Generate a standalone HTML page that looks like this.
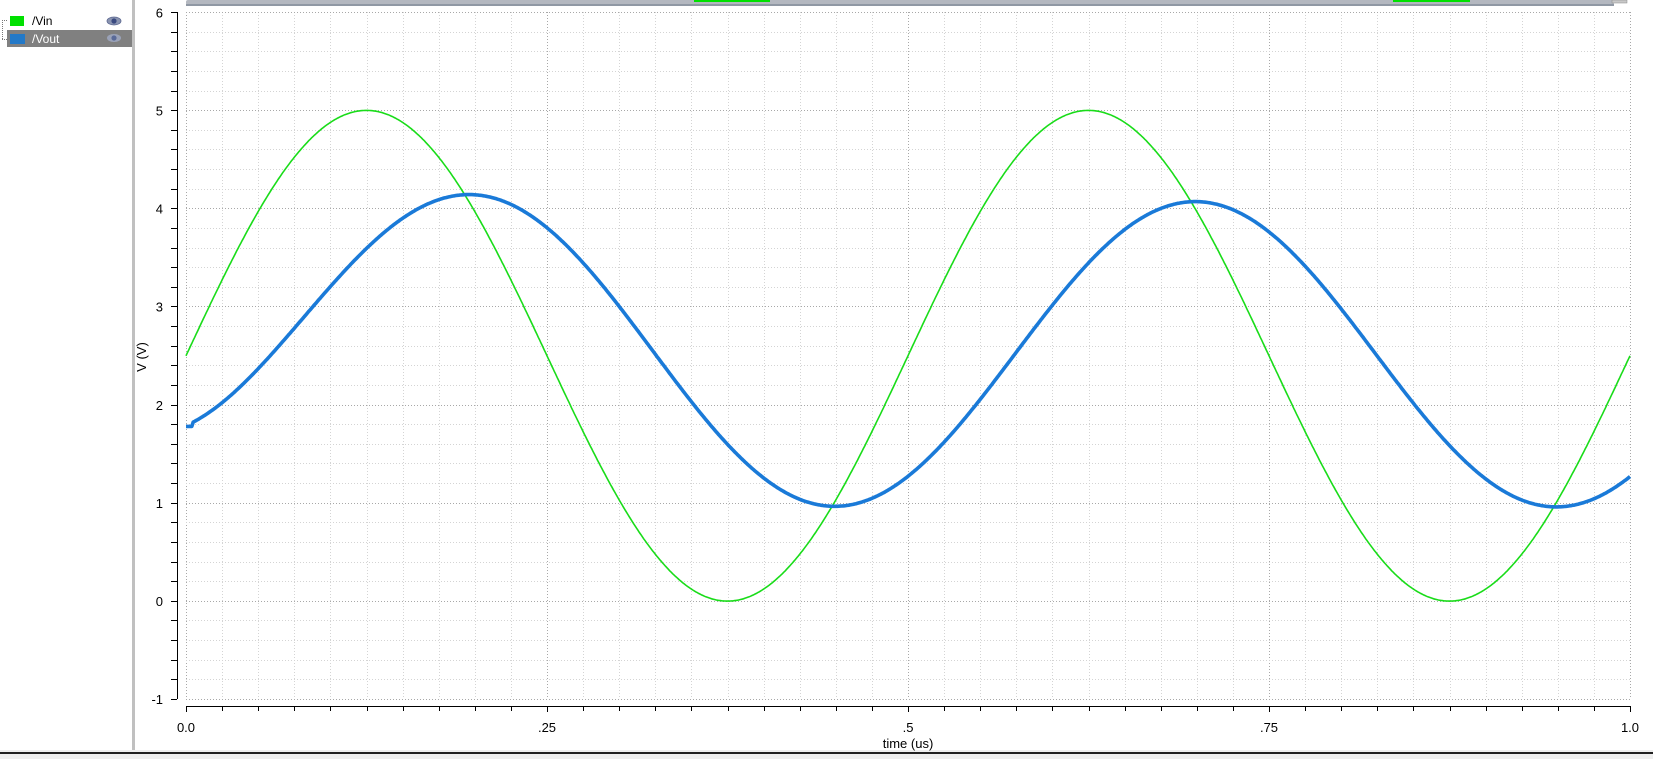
<!DOCTYPE html>
<html><head><meta charset="utf-8">
<style>
html,body{margin:0;padding:0;width:1653px;height:759px;overflow:hidden;background:#fff;font-family:"Liberation Sans",sans-serif;}
svg{position:absolute;left:0;top:0;}
</style></head>
<body>
<svg id="s" width="1653" height="759" xmlns="http://www.w3.org/2000/svg" font-family="Liberation Sans, sans-serif">
<rect x="0" y="0" width="1653" height="759" fill="#fff"/>
<rect x="132" y="0" width="3" height="751" fill="#c0c0c0"/>
<rect x="0" y="750" width="1653" height="9" fill="#eeeeee"/>
<rect x="0" y="752" width="1653" height="2" fill="#202020"/>
<path d="M2 20.5H7 M2.5 20V40 M2 39.5H7" stroke="#777" stroke-dasharray="1,1" fill="none"/>
<rect x="10" y="16" width="14" height="10" fill="#00e000"/>
<text x="32" y="25" font-size="12" fill="#000">/Vin</text>
<g transform="translate(114,21)"><ellipse rx="7" ry="4" fill="#8a94b0"/><circle r="2.6" fill="#3a4a80"/><ellipse rx="7" ry="4" fill="none" stroke="#5a6690" stroke-width="0.8"/></g>
<rect x="7" y="30" width="125" height="17" fill="#808080"/>
<rect x="10" y="34" width="15" height="10" fill="#2379c8"/>
<text x="32" y="43" font-size="12" fill="#fff">/Vout</text>
<g transform="translate(114,38)"><ellipse rx="7" ry="4" fill="#9aa2b8"/><circle r="2.6" fill="#5a6a98"/></g>
<rect x="186" y="0" width="1428" height="5" rx="2" fill="#b4b8c0"/>
<rect x="186" y="4" width="1428" height="2" fill="#9098a4"/>
<rect x="1612" y="0" width="15" height="3" fill="#c8c8c8" stroke="#888" stroke-width="0.5"/>
<rect x="694" y="0" width="76" height="2" fill="#00e000"/>
<rect x="1393" y="0" width="77" height="2" fill="#00e000"/>
<g id="grid"></g>
<g id="axes" stroke="#000" stroke-width="1" fill="none"></g>
<g id="labels" font-size="13" fill="#000"></g>
<text transform="translate(146,357) rotate(-90)" text-anchor="middle" font-size="13" fill="#000">V (V)</text>
<text x="908" y="748" text-anchor="middle" font-size="13" fill="#000">time (us)</text>
<path id="vin" fill="none" stroke="#19dc19" stroke-width="1.6"/>
<path id="vout" fill="none" stroke="#1a7ad8" stroke-width="3.6" stroke-linejoin="round"/>
</svg>
<script>
var NS="http://www.w3.org/2000/svg";
function X(t){return 186+1444*t;}
function Y(v){return 601.1-98.14*v;}
var g=document.getElementById('grid'),a=document.getElementById('axes'),l=document.getElementById('labels');
function ln(p,x1,y1,x2,y2,st,da){var e=document.createElementNS(NS,'line');e.setAttribute('x1',x1);e.setAttribute('y1',y1);e.setAttribute('x2',x2);e.setAttribute('y2',y2);if(st)e.setAttribute('stroke',st);if(da)e.setAttribute('stroke-dasharray',da);p.appendChild(e);}
function tx(x,y,s,anc){var e=document.createElementNS(NS,'text');e.setAttribute('x',x);e.setAttribute('y',y);e.setAttribute('text-anchor',anc);e.textContent=s;l.appendChild(e);}
for(var i=0;i<=40;i++){var x=Math.round(X(i/40))+0.5;var maj=i%10==0;ln(g,x,12,x,699,maj?'#a8a8a8':'#d4d4d4','1,2');ln(a,x,706,x,maj?712:711);}
for(var j=0;j<=35;j++){var y=Math.round(699-j*687/35)+0.5;var maj=j%5==0;ln(g,186,y,1630,y,maj?'#a8a8a8':'#d4d4d4','1,2');ln(a,171,y,177,y);}
ln(a,177.5,12,177.5,699);ln(a,186,706.5,1630,706.5);
for(var v=-1;v<=6;v++){tx(163,Y(v)+5,(v<0?'-1':''+v),'end');}
var xl=['0.0','.25','.5','.75','1.0'];for(var k=0;k<5;k++)tx(X(k/4),732,xl[k],'middle');
var d1='',d2='';
for(var n=0;n<=1000;n++){var t=n/1000;var vi=2.5+2.5*Math.sin(4*Math.PI*t);
var vo=2.515+1.555*Math.sin(4*Math.PI*(t-0.074))+0.52*Math.exp(-t/0.1);
if(t<0.005)vo=1.78;
d1+=(n?'L':'M')+X(t).toFixed(1)+' '+Y(vi).toFixed(1);d2+=(n?'L':'M')+X(t).toFixed(1)+' '+Y(vo).toFixed(1);}
document.getElementById('vin').setAttribute('d',d1);document.getElementById('vout').setAttribute('d',d2);
</script>
</body></html>
